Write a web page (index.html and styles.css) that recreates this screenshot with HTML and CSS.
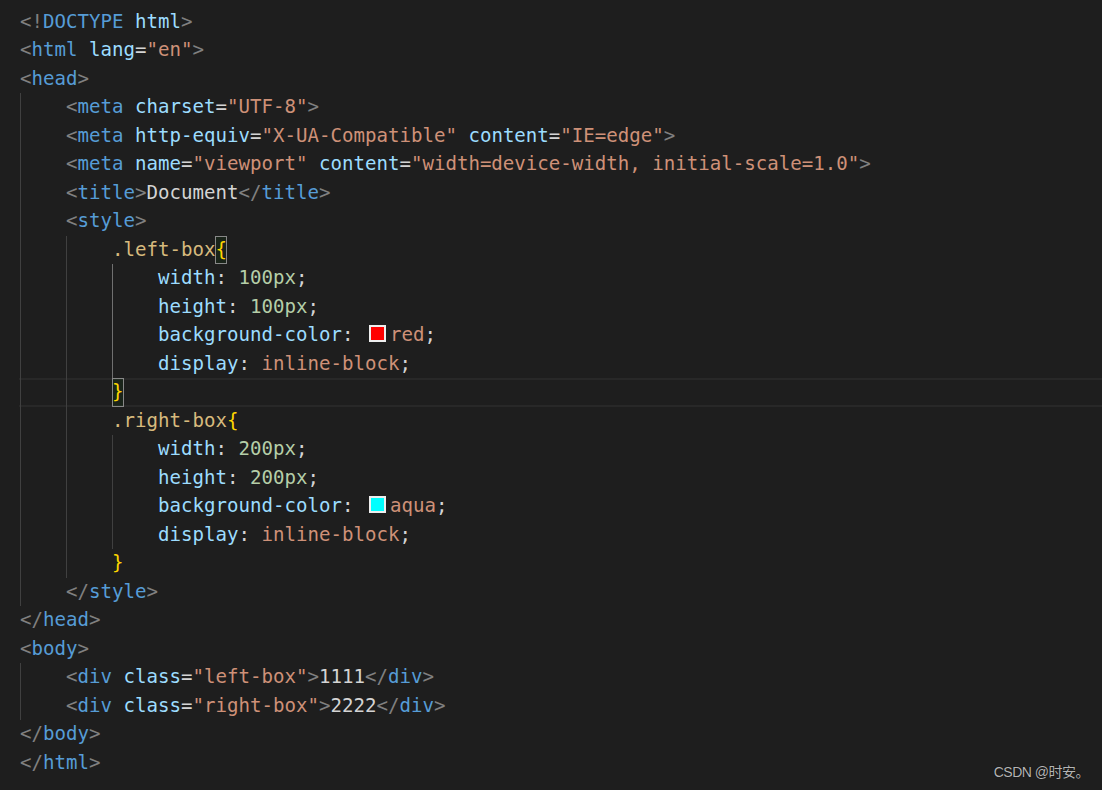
FILE: index.html
```html
<!DOCTYPE html>
<html lang="en">
<head>
    <meta charset="UTF-8">
    <meta name="viewport" content="width=device-width, initial-scale=1.0">
    <title>Document</title>
    <link rel="stylesheet" href="styles.css">
</head>
<body>
    <div class="editor">
        <div class="ln"><span class="p">&lt;!</span><span class="t">DOCTYPE</span> <span class="a">html</span><span class="p">&gt;</span></div>
        <div class="ln"><span class="p">&lt;</span><span class="t">html</span> <span class="a">lang</span>=<span class="s">"en"</span><span class="p">&gt;</span></div>
        <div class="ln"><span class="p">&lt;</span><span class="t">head</span><span class="p">&gt;</span></div>
        <div class="blk">
            <div class="ln"><span class="p">&lt;</span><span class="t">meta</span> <span class="a">charset</span>=<span class="s">"UTF-8"</span><span class="p">&gt;</span></div>
            <div class="ln"><span class="p">&lt;</span><span class="t">meta</span> <span class="a">http-equiv</span>=<span class="s">"X-UA-Compatible"</span> <span class="a">content</span>=<span class="s">"IE=edge"</span><span class="p">&gt;</span></div>
            <div class="ln"><span class="p">&lt;</span><span class="t">meta</span> <span class="a">name</span>=<span class="s">"viewport"</span> <span class="a">content</span>=<span class="s">"width=device-width, initial-scale=1.0"</span><span class="p">&gt;</span></div>
            <div class="ln"><span class="p">&lt;</span><span class="t">title</span><span class="p">&gt;</span>Document<span class="p">&lt;/</span><span class="t">title</span><span class="p">&gt;</span></div>
            <div class="ln"><span class="p">&lt;</span><span class="t">style</span><span class="p">&gt;</span></div>
            <div class="blk">
                <div class="ln"><span class="sel">.left-box</span><span class="br match">{</span></div>
                <div class="blk active">
                    <div class="ln"><span class="a">width</span>: <span class="n">100px</span>;</div>
                    <div class="ln"><span class="a">height</span>: <span class="n">100px</span>;</div>
                    <div class="ln"><span class="a">background-color</span>: <span class="swatch red"></span><span class="s">red</span>;</div>
                    <div class="ln"><span class="a">display</span>: <span class="s">inline-block</span>;</div>
                </div>
                <div class="ln cur"><span class="br match">}</span></div>
                <div class="ln"><span class="sel">.right-box</span><span class="br">{</span></div>
                <div class="blk">
                    <div class="ln"><span class="a">width</span>: <span class="n">200px</span>;</div>
                    <div class="ln"><span class="a">height</span>: <span class="n">200px</span>;</div>
                    <div class="ln"><span class="a">background-color</span>: <span class="swatch aqua"></span><span class="s">aqua</span>;</div>
                    <div class="ln"><span class="a">display</span>: <span class="s">inline-block</span>;</div>
                </div>
                <div class="ln"><span class="br">}</span></div>
            </div>
            <div class="ln"><span class="p">&lt;/</span><span class="t">style</span><span class="p">&gt;</span></div>
        </div>
        <div class="ln"><span class="p">&lt;/</span><span class="t">head</span><span class="p">&gt;</span></div>
        <div class="ln"><span class="p">&lt;</span><span class="t">body</span><span class="p">&gt;</span></div>
        <div class="blk">
            <div class="ln"><span class="p">&lt;</span><span class="t">div</span> <span class="a">class</span>=<span class="s">"left-box"</span><span class="p">&gt;</span>1111<span class="p">&lt;/</span><span class="t">div</span><span class="p">&gt;</span></div>
            <div class="ln"><span class="p">&lt;</span><span class="t">div</span> <span class="a">class</span>=<span class="s">"right-box"</span><span class="p">&gt;</span>2222<span class="p">&lt;/</span><span class="t">div</span><span class="p">&gt;</span></div>
        </div>
        <div class="ln"><span class="p">&lt;/</span><span class="t">body</span><span class="p">&gt;</span></div>
        <div class="ln"><span class="p">&lt;/</span><span class="t">html</span><span class="p">&gt;</span></div>
    </div>

    <div class="mark">CSDN @时安。</div>
</body>
</html>
```

FILE: styles.css
```css
html {
    background-color: #1e1e1e;
}

html,
body {
    margin: 0;
    height: 100%;
    overflow: hidden;
}

.editor {
    padding: 7.75px 0 0 20px;
    font-family: "DejaVu Sans Mono", "Liberation Mono", monospace;
    font-size: 19.1px;
    line-height: 28.5px;
    color: #d4d4d4;
}

.ln {
    white-space: pre;
    height: 28.5px;
}

/* indent guides, one per nesting level */
.blk {
    border-left: 1px solid #404040;
    padding-left: 45px;
}

.blk.active {
    border-left-color: #707070;
}

/* current line */
.cur {
    position: relative;
}

.cur::before {
    content: "";
    position: absolute;
    top: 0;
    bottom: 0;
    left: -93px;
    width: 1100px;
    border-top: 2px solid #282828;
    border-bottom: 2px solid #282828;
    z-index: -1;
}

/* tokens */
.p { color: #808080; }
.t { color: #569cd6; }
.a { color: #9cdcfe; }
.s { color: #ce9178; }
.n { color: #b5cea8; }
.sel { color: #d7ba7d; }
.br { color: #ffd700; }

.match {
    display: inline-block;
    box-shadow: inset 0 0 0 1px #888888;
    background-color: rgba(0, 100, 0, 0.1);
}

.swatch {
    display: inline-block;
    box-sizing: border-box;
    width: 17px;
    height: 17px;
    margin: 0 4px 0 4px;
    border: 2px solid #eeeeee;
    vertical-align: -1px;
}

.swatch.red { background-color: red; }
.swatch.aqua { background-color: aqua; }

.mark {
    position: absolute;
    right: 13px;
    bottom: 9px;
    font-family: "Liberation Sans", "Noto Sans CJK SC", sans-serif;
    font-size: 14px;
    letter-spacing: -0.5px;
    color: #b4b4b4;
    text-shadow: 0 0 1px #000;
}
```
